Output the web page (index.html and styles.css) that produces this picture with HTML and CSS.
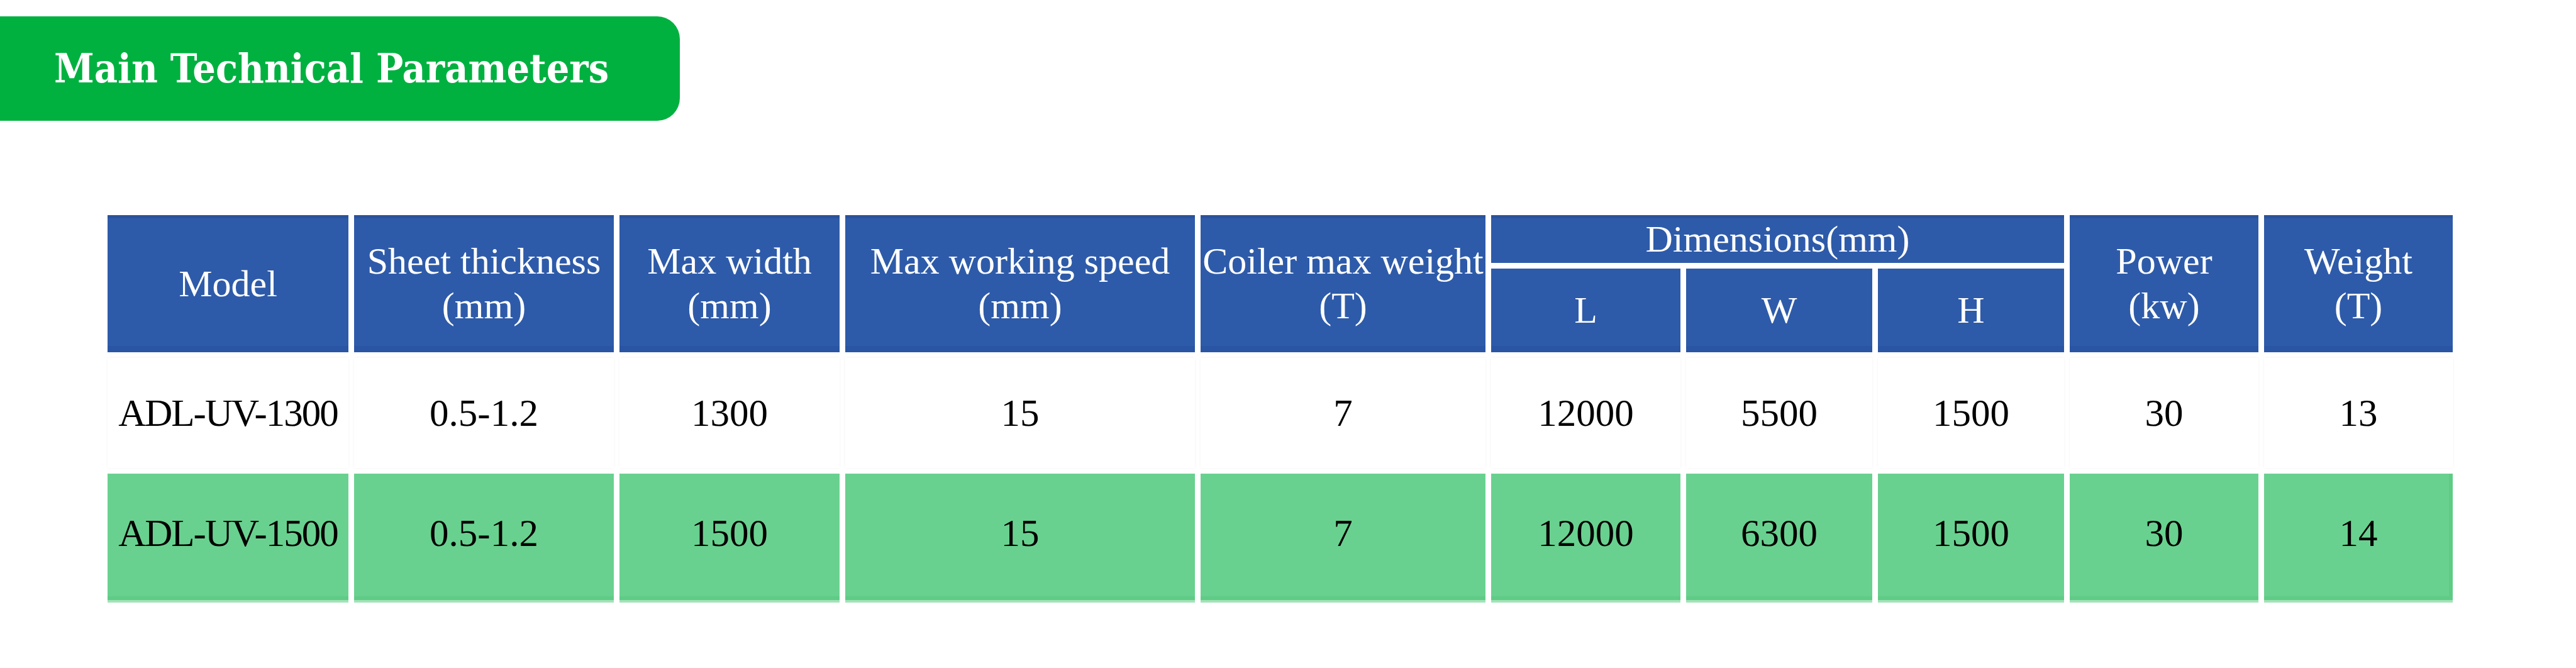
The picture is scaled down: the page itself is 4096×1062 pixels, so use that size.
FILE: index.html
```html
<!DOCTYPE html>
<html lang="en">
<head>
<meta charset="utf-8">
<title>Main Technical Parameters</title>
<link rel="stylesheet" href="styles.css">
</head>
<body>
<div class="page">
  <div class="banner"><h1 class="banner-title">Main Technical Parameters</h1></div>
  <div class="spec-table">
    <div class="cell head span2">Model</div>
    <div class="cell head span2">Sheet thickness<br>(mm)</div>
    <div class="cell head span2">Max width<br>(mm)</div>
    <div class="cell head span2">Max working speed<br>(mm)</div>
    <div class="cell head span2 nowrap">Coiler max weight<br>(T)</div>
    <div class="cell head top dims">Dimensions(mm)</div>
    <div class="cell head span2">Power<br>(kw)</div>
    <div class="cell head span2">Weight<br>(T)</div>
    <div class="cell head sub">L</div>
    <div class="cell head sub">W</div>
    <div class="cell head sub">H</div>

    <div class="cell row-a model">ADL-UV-1300</div>
    <div class="cell row-a">0.5-1.2</div>
    <div class="cell row-a">1300</div>
    <div class="cell row-a">15</div>
    <div class="cell row-a">7</div>
    <div class="cell row-a">12000</div>
    <div class="cell row-a">5500</div>
    <div class="cell row-a">1500</div>
    <div class="cell row-a">30</div>
    <div class="cell row-a">13</div>

    <div class="cell row-b model">ADL-UV-1500</div>
    <div class="cell row-b">0.5-1.2</div>
    <div class="cell row-b">1500</div>
    <div class="cell row-b">15</div>
    <div class="cell row-b">7</div>
    <div class="cell row-b">12000</div>
    <div class="cell row-b">6300</div>
    <div class="cell row-b">1500</div>
    <div class="cell row-b">30</div>
    <div class="cell row-b last">14</div>
  </div>
</div>
</body>
</html>
```
FILE: styles.css
```css
html, body {
  margin: 0;
  padding: 0;
  background: #ffffff;
}

.page {
  width: 4096px;
  height: 1062px;
  overflow: hidden;
  padding-top: 26px;
  box-sizing: border-box;
}

.banner {
  width: 1081px;
  height: 166px;
  background: #00b140;
  border-radius: 0 36px 36px 0;
  display: flex;
  align-items: center;
}

.banner-title {
  margin: 0;
  padding-left: 86px;
  font-family: "DejaVu Serif", "Liberation Serif", serif;
  font-weight: bold;
  font-stretch: condensed;
  font-size: 64px;
  line-height: 1;
  color: #ffffff;
  white-space: nowrap;
}

.spec-table {
  margin-top: 150px;
  margin-left: 171px;
  display: grid;
  grid-template-columns: 383px 413px 350px 556px 453px 301px 296px 296px 300px 300px;
  grid-template-rows: 76px 133px 175px 205px;
  column-gap: 9px;
  row-gap: 9px;
  width: max-content;
  font-family: "Liberation Serif", "Times New Roman", serif;
}

.cell {
  display: flex;
  align-items: center;
  justify-content: center;
  text-align: center;
}

.head {
  background: #2e5ba9;
  color: #ffffff;
  font-size: 60px;
  line-height: 71px;
}

.span2 {
  grid-row: 1 / span 2;
  box-shadow: inset 0 5px 0 #2b529b, inset 0 -10px 0 #2a55a4;
}

.nowrap {
  white-space: nowrap;
}

.top {
  box-shadow: inset 0 5px 0 #2b529b;
}

.dims {
  grid-column: 6 / span 3;
  grid-row: 1;
}

.sub {
  grid-row: 2;
  box-shadow: inset 0 -10px 0 #2a55a4;
}

.row-a {
  background: #ffffff;
  color: #000000;
  font-size: 61px;
  box-shadow: 0 0 4px rgba(0, 0, 0, 0.05);
}

.row-b {
  background: #69d18f;
  color: #000000;
  font-size: 61px;
  padding-bottom: 16px;
  box-shadow: inset 0 -4px 0 #a3e2b9, inset 0 -10px 0 #5fcc86;
}

.row-b.last {
  box-shadow: inset 0 -4px 0 #a3e2b9, inset 0 -10px 0 #5fcc86, inset -6px 0 0 #5fcc86;
}

.model {
  letter-spacing: -2px;
}
```
